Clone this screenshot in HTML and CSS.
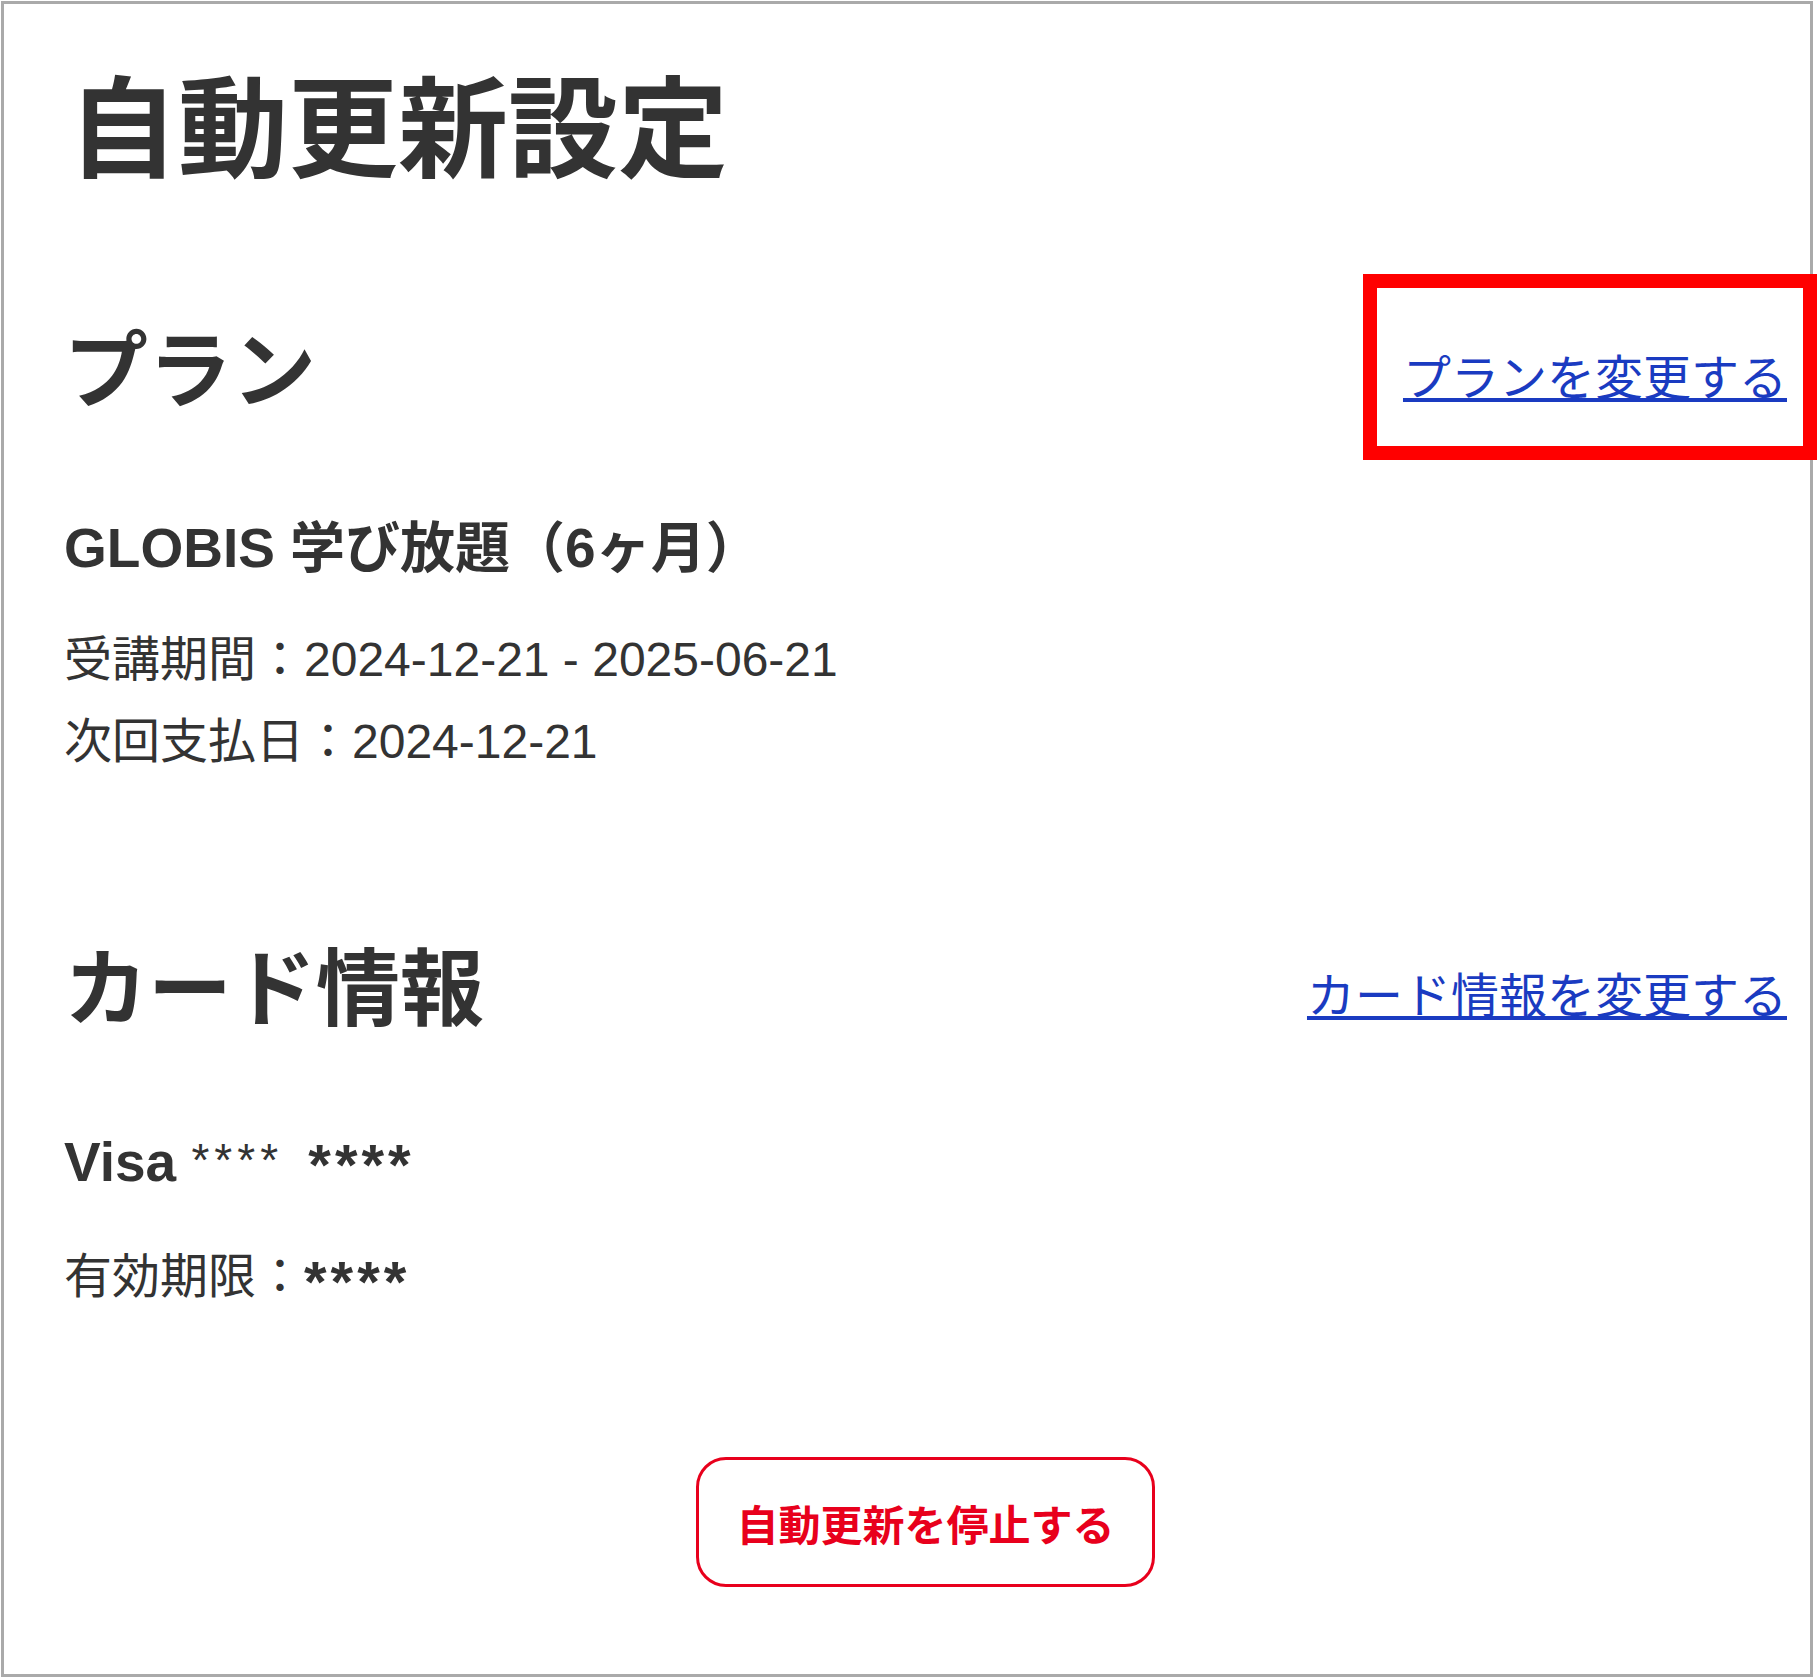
FILE: index.html
```html
<!DOCTYPE html>
<html lang="ja">
<head>
    <meta charset="UTF-8">
    <meta name="viewport" content="width=device-width, initial-scale=1.0">
    <title>自動更新設定</title>
    <link rel="stylesheet" href="styles.css">
</head>
<body>

    <!-- Main panel -->
    <div class="page">
        <h1 class="page-title">自動更新設定</h1>

        <!-- Plan -->
        <section class="block plan-block">
            <div class="block-head">
                <h2>プラン</h2>
                <a href="#" class="change-link">プランを変更する</a>
            </div>
            <p class="item-name">GLOBIS 学び放題（6ヶ月）</p>
            <p class="item-line first">受講期間：2024-12-21 - 2025-06-21</p>
            <p class="item-line">次回支払日：2024-12-21</p>
        </section>

        <!-- Card -->
        <section class="block card-block">
            <div class="block-head">
                <h2>カード情報</h2>
                <a href="#" class="change-link">カード情報を変更する</a>
            </div>
            <p class="item-name card-name">Visa <span class="mask-sm">****</span> <span class="mask mask-gap">****</span></p>
            <p class="item-line expiry">有効期限：<span class="mask mask-low">****</span></p>
        </section>

        <div class="actions">
            <button class="stop-btn" id="stopButton">自動更新を停止する</button>
        </div>
    </div>

    <!-- Annotation box -->
    <div class="highlight"></div>

</body>
</html>
```

FILE: styles.css
```css
body {
    margin: 0;
    font-family: "Liberation Sans", "Noto Sans CJK JP", sans-serif;
    color: #333;
    background-color: #fff;
}

/* Main panel */
.page {
    margin: 1px 0 0 1px;
    width: 1812px;
    height: 1676px;
    box-sizing: border-box;
    border: 3px solid #aaa;
    padding: 64px 23px 0 60px;
}

.page-title {
    margin: 0 0 0 4px;
    font-size: 110px;
    line-height: 126px;
    font-weight: 700;
}

/* Sections */
.plan-block {
    margin-top: 128px;
}

.card-block {
    margin-top: 157px;
}

.block-head {
    display: flex;
    justify-content: space-between;
    align-items: center;
    height: 100px;
}

.block-head h2 {
    margin: 0;
    font-size: 84px;
    line-height: 100px;
    font-weight: 700;
}

.change-link {
    margin-top: 14px;
    font-size: 48px;
    line-height: 60px;
    color: #1a3bc1;
    text-decoration: underline;
}

.item-name {
    margin: 91px 0 0;
    font-size: 55px;
    line-height: 70px;
    font-weight: 700;
}

.item-line {
    margin: 0;
    font-size: 48px;
    line-height: 82px;
}

.item-line.first {
    margin-top: 36px;
}

.card-name {
    margin-top: 87px;
}

.item-line.expiry {
    margin-top: 39px;
}

/* Masked card numbers */
.mask-sm {
    font-size: 46px;
    font-weight: 400;
    line-height: 0;
    letter-spacing: 5px;
    vertical-align: 5px;
}

.mask {
    font-size: 58px;
    font-weight: 700;
    line-height: 0;
    letter-spacing: 4px;
    vertical-align: -4px;
}

.mask-gap {
    margin-left: 10px;
}

.mask-low {
    vertical-align: -9px;
}

/* Stop button */
.actions {
    margin-top: 139px;
    display: flex;
    justify-content: center;
}

.stop-btn {
    width: 459px;
    height: 130px;
    background-color: #fff;
    color: #e8001c;
    border: 3px solid #e8001c;
    border-radius: 30px;
    font-family: inherit;
    font-size: 42px;
    font-weight: 700;
    cursor: pointer;
}

/* Red annotation overlay */
.highlight {
    position: absolute;
    left: 1363px;
    top: 274px;
    width: 454px;
    height: 186px;
    box-sizing: border-box;
    border: 14px solid #ff0000;
}
```
